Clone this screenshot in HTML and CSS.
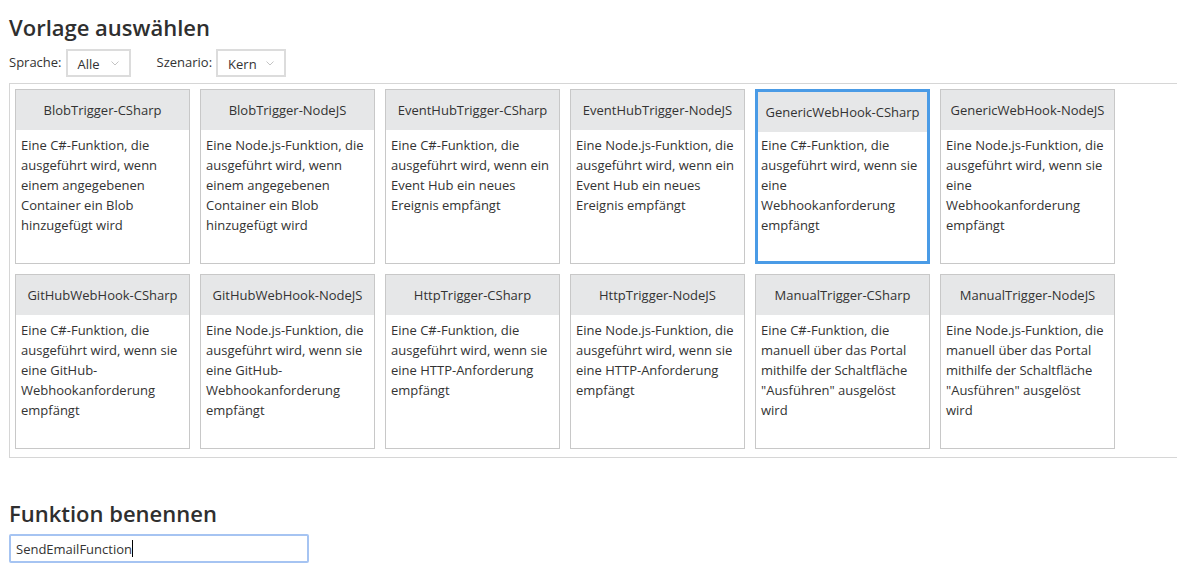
FILE: index.html
```html
<!DOCTYPE html>
<html lang="de">
<head>
<meta charset="utf-8">
<title>Vorlage auswählen</title>
<link rel="stylesheet" href="styles.css">
</head>
<body>
<main class="page">
  <h1 class="section-title">Vorlage auswählen</h1>
  <div class="filters">
    <label class="filter-label">Sprache:</label>
    <div class="select select-lang"><span>Alle</span><svg class="chev" width="8" height="5" viewBox="0 0 8 5"><polyline points="0.5,0.5 4,4 7.5,0.5" fill="none" stroke="#c4c4c4" stroke-width="1"/></svg></div>
    <label class="filter-label filter-label-gap">Szenario:</label>
    <div class="select select-scen"><span>Kern</span><svg class="chev" width="8" height="5" viewBox="0 0 8 5"><polyline points="0.5,0.5 4,4 7.5,0.5" fill="none" stroke="#c4c4c4" stroke-width="1"/></svg></div>
  </div>

  <div class="templates">
    <div class="card"><div class="card-head">BlobTrigger-CSharp</div><div class="card-body">Eine C#-Funktion, die ausgeführt wird, wenn einem angegebenen Container ein Blob hinzugefügt wird</div></div>
    <div class="card"><div class="card-head">BlobTrigger-NodeJS</div><div class="card-body">Eine Node.js-Funktion, die ausgeführt wird, wenn einem angegebenen Container ein Blob hinzugefügt wird</div></div>
    <div class="card"><div class="card-head">EventHubTrigger-CSharp</div><div class="card-body">Eine C#-Funktion, die ausgeführt wird, wenn ein Event Hub ein neues Ereignis empfängt</div></div>
    <div class="card"><div class="card-head">EventHubTrigger-NodeJS</div><div class="card-body">Eine Node.js-Funktion, die ausgeführt wird, wenn ein Event Hub ein neues Ereignis empfängt</div></div>
    <div class="card selected"><div class="card-head">GenericWebHook-CSharp</div><div class="card-body">Eine C#-Funktion, die ausgeführt wird, wenn sie eine Webhookanforderung empfängt</div></div>
    <div class="card"><div class="card-head">GenericWebHook-NodeJS</div><div class="card-body">Eine Node.js-Funktion, die ausgeführt wird, wenn sie eine Webhookanforderung empfängt</div></div>
    <div class="card"><div class="card-head">GitHubWebHook-CSharp</div><div class="card-body">Eine C#-Funktion, die ausgeführt wird, wenn sie eine GitHub-Webhookanforderung empfängt</div></div>
    <div class="card"><div class="card-head">GitHubWebHook-NodeJS</div><div class="card-body">Eine Node.js-Funktion, die ausgeführt wird, wenn sie eine GitHub-Webhookanforderung empfängt</div></div>
    <div class="card"><div class="card-head">HttpTrigger-CSharp</div><div class="card-body">Eine C#-Funktion, die ausgeführt wird, wenn sie eine HTTP-Anforderung empfängt</div></div>
    <div class="card"><div class="card-head">HttpTrigger-NodeJS</div><div class="card-body">Eine Node.js-Funktion, die ausgeführt wird, wenn sie eine HTTP-Anforderung empfängt</div></div>
    <div class="card"><div class="card-head">ManualTrigger-CSharp</div><div class="card-body">Eine C#-Funktion, die manuell über das Portal mithilfe der Schaltfläche "Ausführen" ausgelöst wird</div></div>
    <div class="card"><div class="card-head">ManualTrigger-NodeJS</div><div class="card-body">Eine Node.js-Funktion, die manuell über das Portal mithilfe der Schaltfläche "Ausführen" ausgelöst wird</div></div>
  </div>

  <h2 class="section-title section-title-second">Funktion benennen</h2>
  <div class="name-input"><span>SendEmailFunction</span><span class="caret"></span></div>
</main>
</body>
</html>
```

FILE: styles.css
```css
html, body {
  margin: 0;
  padding: 0;
  background: #ffffff;
  overflow: hidden;
}

body {
  font-family: "Open Sans", "Noto Sans", "Liberation Sans", sans-serif;
  font-size: 13px;
  color: #333333;
}

.page {
  padding: 0 0 0 9px;
}

.section-title {
  margin: 12px 0 0 0;
  font-size: 22px;
  line-height: 30px;
  font-weight: 600;
  color: #2f2f2f;
}

.section-title-second {
  margin-top: 40px;
}

.filters {
  display: flex;
  align-items: center;
  margin-top: 7px;
  height: 28px;
}

.filter-label {
  font-size: 13px;
  line-height: 18px;
  padding-bottom: 3px;
  margin-right: 4px;
}

.filter-label-gap {
  margin-left: 26px;
}

.select {
  box-sizing: border-box;
  height: 28px;
  border: 2px solid #dcdcdc;
  display: flex;
  align-items: center;
  justify-content: space-between;
  padding: 2px 10px 0 10px;
  font-size: 13px;
}

.select-lang {
  width: 65px;
}

.select-scen {
  width: 70px;
}

.chev {
  display: block;
  margin-top: -1px;
}

.templates {
  margin-top: 6px;
  margin-right: -40px;
  border: 1px solid #d6d6d6;
  padding: 5px 5px 8px 5px;
  display: flex;
  flex-wrap: wrap;
  gap: 10px;
}

.card {
  box-sizing: border-box;
  width: 175px;
  height: 175px;
  border: 1px solid #c8c8c8;
  background: #ffffff;
}

.card-head {
  height: 40px;
  line-height: 40px;
  background: #e6e7e8;
  text-align: center;
  font-size: 13px;
  color: #333333;
  white-space: nowrap;
}

.card-body {
  padding: 5px 5px;
  line-height: 20px;
  font-size: 13px;
}

.card.selected {
  border: 3px solid #4a9be6;
}

.card.selected .card-body {
  padding: 3px 3px;
}

.name-input {
  box-sizing: border-box;
  margin-top: 6px;
  width: 300px;
  height: 29px;
  border: 2px solid #a6c4f2;
  border-radius: 2px;
  padding: 0 5px;
  display: flex;
  align-items: center;
  font-size: 13px;
  color: #333333;
}

.caret {
  display: inline-block;
  width: 0;
  height: 17px;
  border-left: 1px solid #000000;
}
```
